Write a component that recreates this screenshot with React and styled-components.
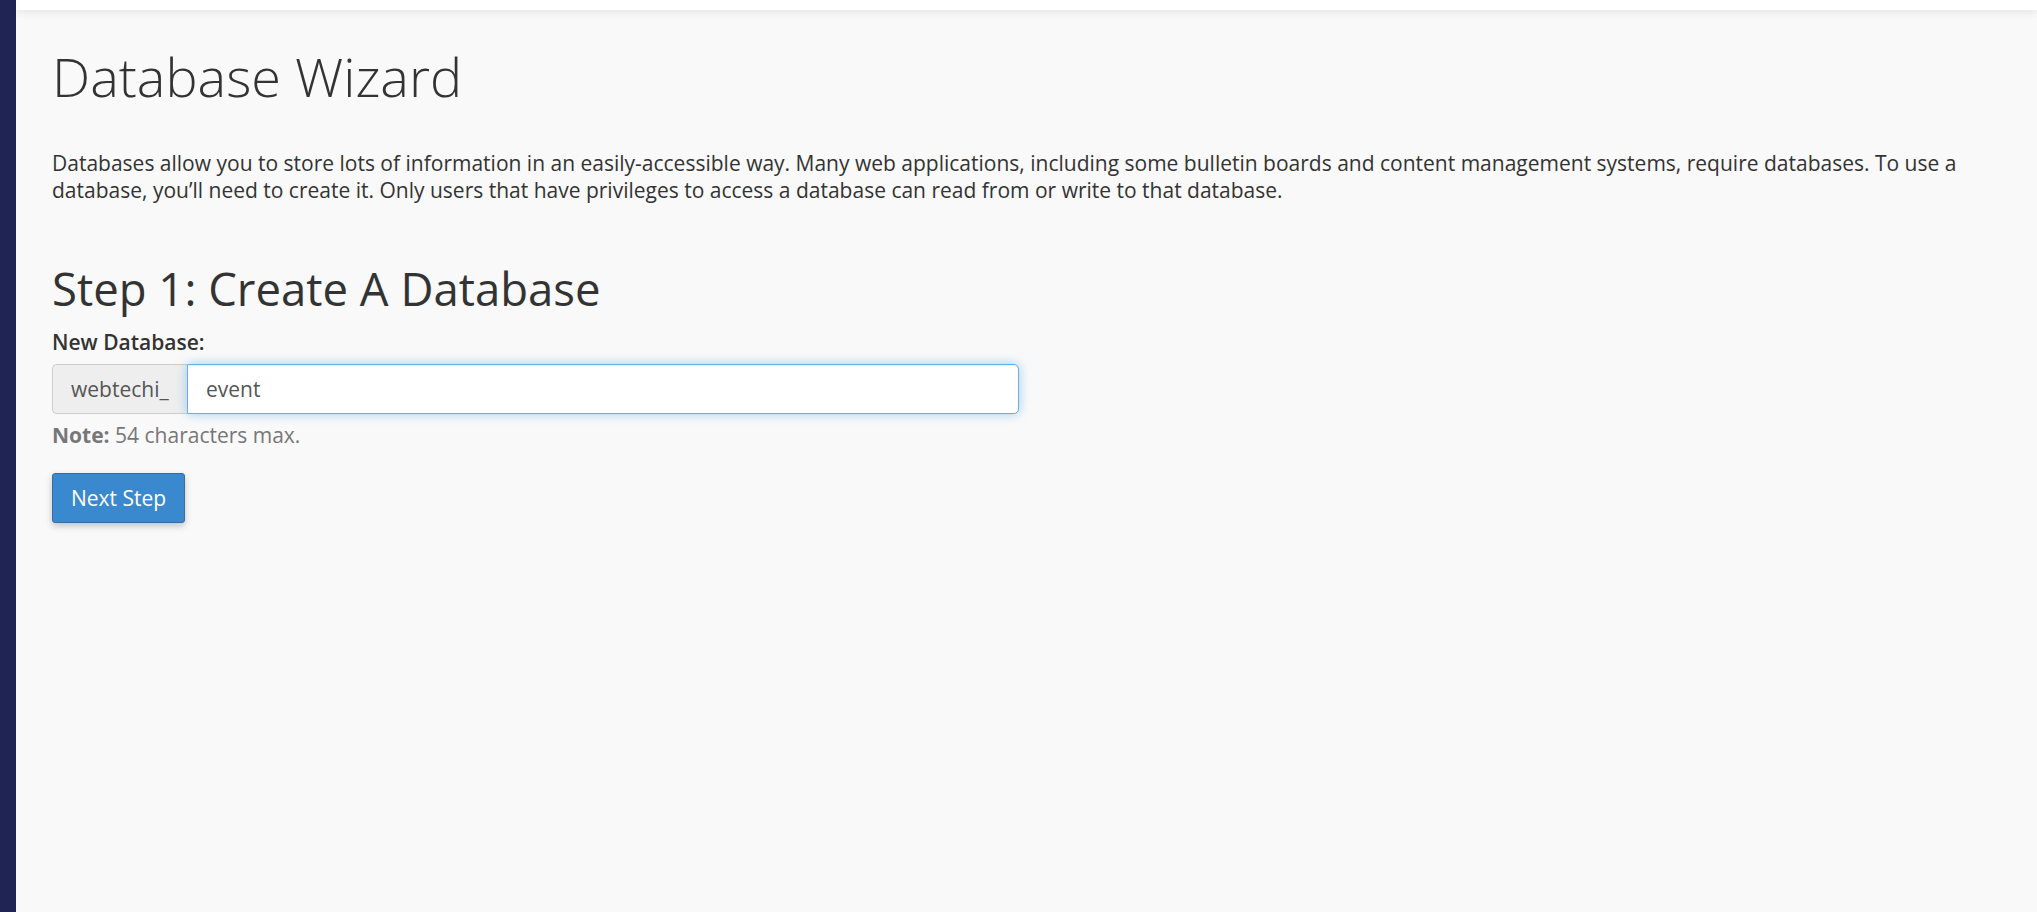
import React, { Component } from 'react'
import styled, { createGlobalStyle } from 'styled-components'

const GlobalStyle = createGlobalStyle`
  html, body {
    margin: 0;
    padding: 0;
    height: 100%;
    background: #f9f9f9;
  }
  body {
    font-family: "Open Sans", "Noto Sans", sans-serif;
    color: #333;
  }
  #root {
    height: 100%;
  }
`

const Shell = styled.div`
  display: flex;
  min-height: 912px;
  background: #f9f9f9;
`

const Sidebar = styled.div`
  width: 16px;
  flex-shrink: 0;
  background: #1f2454;
`

const Main = styled.div`
  flex: 1;
  display: flex;
  flex-direction: column;
`

const TopBar = styled.div`
  height: 10px;
  background: #fff;
  box-shadow: 0 2px 8px rgba(0, 0, 0, 0.09);
  position: relative;
  z-index: 1;
`

const Content = styled.div`
  display: flex;
  flex-direction: column;
  padding: 37px 36px 0 36px;
`

const Title = styled.h1`
  margin: 0;
  font-size: 54px;
  line-height: 59px;
  font-weight: 300;
  color: #333;
`

const Description = styled.p`
  margin: 44px 0 0 0;
  font-size: 21px;
  line-height: 27px;
  color: #333;
`

const StepHeading = styled.h2`
  margin: 61px 0 0 0;
  font-size: 45.5px;
  line-height: 47px;
  font-weight: 500;
  color: #333;
`

const Label = styled.label`
  display: block;
  margin-top: 17px;
  font-size: 21px;
  line-height: 27px;
  font-weight: 600;
  color: #333;
`

const InputGroup = styled.div`
  display: flex;
  width: 967px;
  height: 50px;
  margin-top: 8px;
`

const Addon = styled.span`
  display: flex;
  align-items: center;
  box-sizing: border-box;
  width: 135px;
  padding: 0 18px;
  background: #eee;
  border: 1px solid #ccc;
  border-right: 0;
  border-radius: 5px 0 0 5px;
  font-size: 21px;
  color: #555;
`

const TextInput = styled.input`
  flex: 1;
  box-sizing: border-box;
  height: 50px;
  padding: 0 18px;
  border: 1px solid #66afe9;
  border-radius: 0 5px 5px 0;
  background: #fff;
  font-family: "Open Sans", "Noto Sans", sans-serif;
  font-size: 21px;
  color: #555;
  outline: none;
  box-shadow: inset 0 1px 1px rgba(0, 0, 0, 0.075), 0 0 11px rgba(102, 175, 233, 0.6);
`

const Note = styled.div`
  margin-top: 8px;
  font-size: 21px;
  line-height: 27px;
  color: #777;

  strong {
    font-weight: 700;
  }
`

const Button = styled.button`
  align-self: flex-start;
  margin-top: 24px;
  height: 50px;
  padding: 0 18px;
  background: #3a88cd;
  border: 1px solid #2f70aa;
  border-radius: 3px;
  color: #fff;
  font-family: "Open Sans", "Noto Sans", sans-serif;
  font-size: 21px;
  cursor: pointer;
  box-shadow: 0 3px 7px rgba(0, 0, 0, 0.22);
`

class App extends Component {
  state = {
    dbName: "event"
  }

  handleChange = e => {
    this.setState({ dbName: e.target.value })
  }

  render() {
    const { dbName } = this.state
    return (
      <Shell>
        <GlobalStyle />
        <Sidebar />
        <Main>
          <TopBar />
          <Content>
            <Title>Database Wizard</Title>
            <Description>
              Databases allow you to store lots of information in an easily-accessible way. Many web applications, including some bulletin boards and content management systems, require databases. To use a database, you’ll need to create it. Only users that have privileges to access a database can read from or write to that database.
            </Description>
            <StepHeading>Step 1: Create A Database</StepHeading>
            <Label htmlFor="db">New Database:</Label>
            <InputGroup>
              <Addon>webtechi_</Addon>
              <TextInput id="db" type="text" value={dbName} onChange={this.handleChange} />
            </InputGroup>
            <Note><strong>Note:</strong> 54 characters max.</Note>
            <Button type="button">Next Step</Button>
          </Content>
        </Main>
      </Shell>
    )
  }
}

export default App
